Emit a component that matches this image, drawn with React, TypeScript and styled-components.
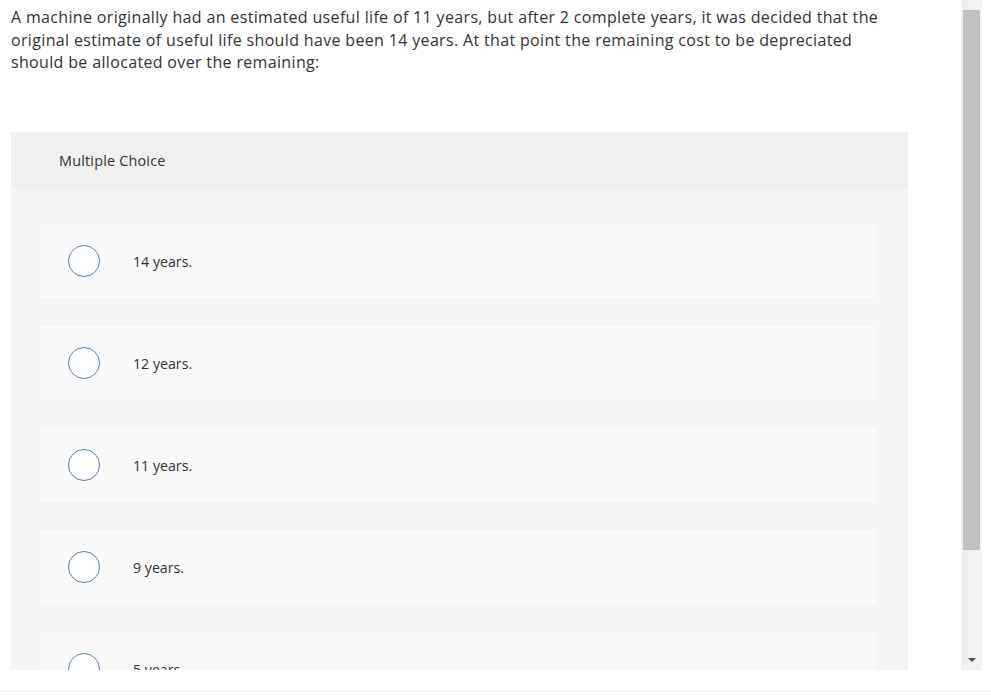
import styled, { createGlobalStyle } from 'styled-components';

const Global = createGlobalStyle`
  html, body {
    margin: 0;
    padding: 0;
    background: #fff;
  }
  body {
    font-family: "Open Sans", "Liberation Sans", sans-serif;
    color: #333;
  }
`;

const PAGE = styled.div`
  width: 991px;
  height: 696px;
  display: flex;
  flex-direction: column;
  overflow: hidden;
`;

const FRAME = styled.div`
  display: flex;
  height: 670px;
`;

const VIEWPORT = styled.div`
  width: 961px;
  height: 670px;
  overflow: hidden;
`;

const QUESTION = styled.p`
  margin: 0;
  padding: 6px 0 0 11px;
  font-size: 16px;
  letter-spacing: 0.34px;
  line-height: 22.5px;
  white-space: nowrap;
  color: #333;
`;

const CARD = styled.div`
  margin: 58.5px 0 0 11px;
  width: 897px;
  background: #f5f5f5;
`;

const CARD_HEAD = styled.div`
  height: 56px;
  display: flex;
  align-items: center;
  padding-left: 48px;
  background: #f0f0f0;
  font-size: 14.4px;
  letter-spacing: 0.2px;
  color: #333;
`;

const OPTIONS = styled.ul`
  list-style: none;
  margin: 0;
  padding: 36px 32px 40px 29px;
  display: flex;
  flex-direction: column;
  gap: 28px;
`;

const OPTION = styled.li`
  height: 74px;
  display: flex;
  align-items: center;
  padding-left: 28px;
  background: #fafafa;
  border-radius: 3px;
`;

const RADIO = styled.span`
  width: 30px;
  height: 30px;
  border-radius: 50%;
  border: 1.5px solid #5a82ad;
  background: #fff;
  flex-shrink: 0;
`;

const LABEL = styled.span`
  margin-left: 33px;
  font-size: 14.2px;
  color: #333;
`;

const TRACK = styled.div`
  width: 21px;
  height: 670px;
  background: #f1f1f1;
  display: flex;
  flex-direction: column;
  align-items: center;
  padding-top: 10px;
  box-sizing: border-box;
`;

const THUMB = styled.div`
  width: 17px;
  height: 540px;
  background: #c1c1c1;
`;

const ARROW = styled.div`
  margin-top: auto;
  margin-bottom: 8px;
  width: 0;
  height: 0;
  border-left: 4px solid transparent;
  border-right: 4px solid transparent;
  border-top: 4px solid #505050;
`;

const FOOT = styled.div`
  flex: 1;
  border-bottom: 1px solid #ececec;
  margin-bottom: 4px;
`;

const choices = ['14 years.', '12 years.', '11 years.', '9 years.', '5 years.'];

export default function App() {
  return (
    <PAGE>
      <Global />
      <FRAME>
        <VIEWPORT>
          <QUESTION>
            A machine originally had an estimated useful life of 11 years, but after 2 complete years, it was decided that the
            <br />
            original estimate of useful life should have been 14 years. At that point the remaining cost to be depreciated
            <br />
            should be allocated over the remaining:
          </QUESTION>
          <CARD>
            <CARD_HEAD>Multiple Choice</CARD_HEAD>
            <OPTIONS>
              {choices.map((c) => (
                <OPTION key={c}>
                  <RADIO />
                  <LABEL>{c}</LABEL>
                </OPTION>
              ))}
            </OPTIONS>
          </CARD>
        </VIEWPORT>
        <TRACK>
          <THUMB />
          <ARROW />
        </TRACK>
      </FRAME>
      <FOOT />
    </PAGE>
  );
}
